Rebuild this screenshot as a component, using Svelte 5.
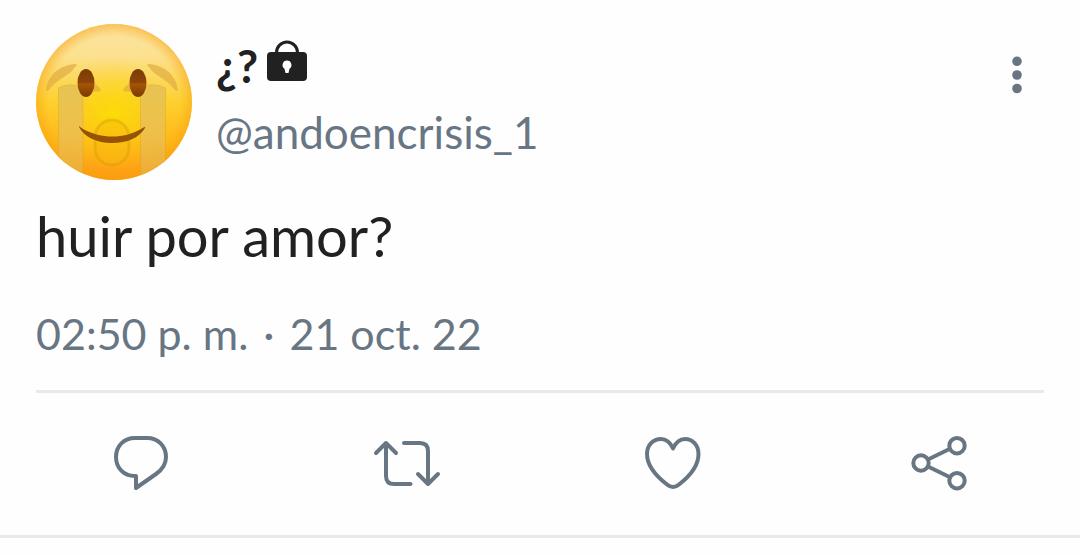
<script lang="ts">
  type Action = {
    id: string;
    label: string;
    paths: string[];
    dots?: number[][];
  };

  const tweet = {
    name: "¿?",
    handle: "@andoencrisis_1",
    text: "huir por amor?",
    time: "02:50 p. m.",
    date: "21 oct. 22",
  };

  const actions: Action[] = [
    {
      id: "reply",
      label: "Responder",
      paths: [
        "M31 49H29.500C19 49 11 41 11 30C11 19 19 11 30 11H42C53 11 61 19 61 30C61 37 57.500 42.500 51 47L31 61Z",
      ],
    },
    {
      id: "retweet",
      label: "Retwittear",
      paths: [
        "M5 26L15 16L25 26M15 17V49Q15 57 23 57H39.500",
        "M33 16H49Q57 16 57 24V57M47 47L57 57L67 47",
      ],
    },
    {
      id: "like",
      label: "Me gusta",
      paths: [
        "M36 21.500C33 15 29 12 24 12C16 12 10 18 10 27C10 38 19 49 30 57.500Q36 62.500 42 57.500C53 49 61.500 38 61.500 27C61.500 18 55.500 12 48 12C43 12 39 15 36 21.500Z",
      ],
    },
    {
      id: "share",
      label: "Compartir",
      paths: ["M26 32L46.500 22M26 40L46.500 50"],
      dots: [
        [18, 36],
        [54, 18.7],
        [54, 53.7],
      ],
    },
  ];
</script>

<article class="tweet">
  <div class="content">
    <header>
      <svg class="avatar" viewBox="0 0 156 156" role="img" aria-label="Avatar">
        <defs>
          <linearGradient id="face" x1="0" y1="0" x2="0" y2="1">
            <stop offset="0" stop-color="#fae3a0" />
            <stop offset="0.2" stop-color="#fce190" />
            <stop offset="0.5" stop-color="#fdd02e" />
            <stop offset="0.75" stop-color="#feb818" />
            <stop offset="1" stop-color="#fd9a12" />
          </linearGradient>
          <radialGradient id="glow" cx="0.5" cy="0.58" r="0.36">
            <stop offset="0" stop-color="#fbe000" stop-opacity="0.85" />
            <stop offset="0.4" stop-color="#fbd808" stop-opacity="0.55" />
            <stop offset="1" stop-color="#ffd020" stop-opacity="0" />
          </radialGradient>
          <radialGradient id="rim" cx="0.5" cy="0.5" r="0.5">
            <stop offset="0.84" stop-color="#fca818" stop-opacity="0" />
            <stop offset="1" stop-color="#f7a010" stop-opacity="0.5" />
          </radialGradient>
          <linearGradient id="eye" x1="0" y1="0" x2="0" y2="1">
            <stop offset="0" stop-color="#7b3d08" />
            <stop offset="0.45" stop-color="#8a4407" />
            <stop offset="0.55" stop-color="#a65406" />
            <stop offset="1" stop-color="#7a3b04" />
          </linearGradient>
          <linearGradient id="tear" x1="0" y1="0" x2="0" y2="1">
            <stop offset="0" stop-color="#e3c158" />
            <stop offset="0.5" stop-color="#ecc052" />
            <stop offset="1" stop-color="#eeab34" />
          </linearGradient>
          <clipPath id="round"><circle cx="78" cy="78" r="78" /></clipPath>
        </defs>
        <g clip-path="url(#round)">
          <rect width="156" height="156" fill="url(#face)" />
          <rect width="156" height="156" fill="url(#glow)" />
          <rect width="156" height="156" fill="url(#rim)" />
          <g fill="url(#tear)" stroke="#c99c22" stroke-opacity="0.35" opacity="0.85">
            <path d="M22.500 64Q33 58 47 63V160H22.500Z" />
            <path d="M104.500 63Q118 58 129.500 64V160H104.500Z" />
          </g>
          <g fill="#dba63a" opacity="0.6">
            <path d="M10 66C12 51 23 41 40 40Q42 41 38 44C35 51 22 54 13 66Q11 68 10 66Z" />
            <path d="M142 66C140 51 129 41 112 40Q110 41 114 44C117 51 130 54 139 66Q141 68 142 66Z" />
            <path d="M56 58Q64 62 65 67Q58 69 51 66Z" />
            <path d="M96 58Q88 62 87 67Q94 69 101 66Z" />
          </g>
          <rect
            x="59"
            y="96"
            width="34"
            height="45"
            rx="17"
            fill="#f8b80c"
            fill-opacity="0.45"
            stroke="#cf9408"
            stroke-opacity="0.35"
            stroke-width="3"
          />
          <ellipse cx="50" cy="59" rx="8.500" ry="14" fill="url(#eye)" />
          <ellipse cx="102" cy="59" rx="8.500" ry="14" fill="url(#eye)" />
          <path
            d="M43 103C43 101 44 103 47 105C65 115 88 115 105 105C108 103 110 102 109 104C103 114 91 119 76 119C61 119 48 113 43 103Z"
            fill="#945305"
          />
        </g>
      </svg>

      <div class="author">
        <div class="name">
          <span>{tweet.name}</span>
          <svg class="lock" viewBox="0 0 42 42" role="img" aria-label="Cuenta protegida">
            <path d="M10.500 14V12.500A10.500 10.500 0 0 1 31.500 12.500V14" fill="none" stroke="#212121" stroke-width="3" />
            <rect x="1" y="12" width="40" height="29" rx="4" fill="#212121" />
            <path d="M21 20.500a4.500 4.500 0 0 0-2.500 8.200L19.500 33h3L23.500 28.700A4.500 4.500 0 0 0 21 20.500Z" fill="#fff" />
          </svg>
        </div>
        <div class="handle">{tweet.handle}</div>
      </div>

      <button class="more" aria-label="Más opciones">
        <svg viewBox="0 0 12 38">
          <circle cx="6" cy="5.300" r="4.800" />
          <circle cx="6" cy="19" r="4.800" />
          <circle cx="6" cy="32.500" r="4.800" />
        </svg>
      </button>
    </header>

    <p class="text">{tweet.text}</p>
    <div class="meta">
      <time>{tweet.time}</time><span class="dot">·</span><time>{tweet.date}</time>
    </div>
  </div>

  <div class="actions">
    {#each actions as action (action.id)}
      <button aria-label={action.label}>
        <svg viewBox="0 0 72 72">
          {#each action.paths as d}
            <path {d} />
          {/each}
          {#each action.dots ?? [] as [cx, cy]}
            <circle {cx} {cy} r="7.700" />
          {/each}
        </svg>
      </button>
    {/each}
  </div>
</article>

<style>
  :global(body) {
    margin: 0;
    background: #fefefe;
  }

  .tweet {
    font-family: Lato, "Noto Sans", sans-serif;
    color: #212121;
    border-bottom: 3px solid #e9e9e9;
  }

  .content {
    padding: 24px 36px 0;
  }

  header {
    display: flex;
    align-items: flex-start;
  }

  .avatar {
    width: 156px;
    height: 156px;
    flex: none;
  }

  .author {
    flex: 1;
    min-width: 0;
    padding: 16px 0 0 24px;
  }

  .name {
    display: flex;
    align-items: flex-start;
    gap: 8px;
    font-size: 46px;
    font-weight: 700;
    line-height: 52px;
  }

  .lock {
    width: 42px;
    height: 42px;
  }

  .handle {
    font-size: 44px;
    line-height: 80px;
    color: #687684;
  }

  button {
    display: flex;
    align-items: center;
    justify-content: center;
    padding: 0;
    border: 0;
    background: none;
    color: #687684;
    cursor: pointer;
  }

  .more {
    width: 54px;
    height: 102px;
  }

  .more svg {
    width: 12px;
    height: 38px;
    fill: currentColor;
  }

  .text {
    margin: 18px 0 0;
    font-size: 56px;
    line-height: 76px;
  }

  .meta {
    padding: 32px 0 28px;
    border-bottom: 3px solid #e9e9e9;
    font-size: 43px;
    line-height: 56px;
    color: #687684;
  }

  .dot {
    margin: 0 15px;
  }

  .actions {
    display: flex;
    padding: 34px 8px 36px;
  }

  .actions button {
    flex: 1;
  }

  .actions svg {
    width: 72px;
    height: 72px;
    fill: none;
    stroke: currentColor;
    stroke-width: 4;
    stroke-linecap: round;
    stroke-linejoin: round;
  }
</style>
